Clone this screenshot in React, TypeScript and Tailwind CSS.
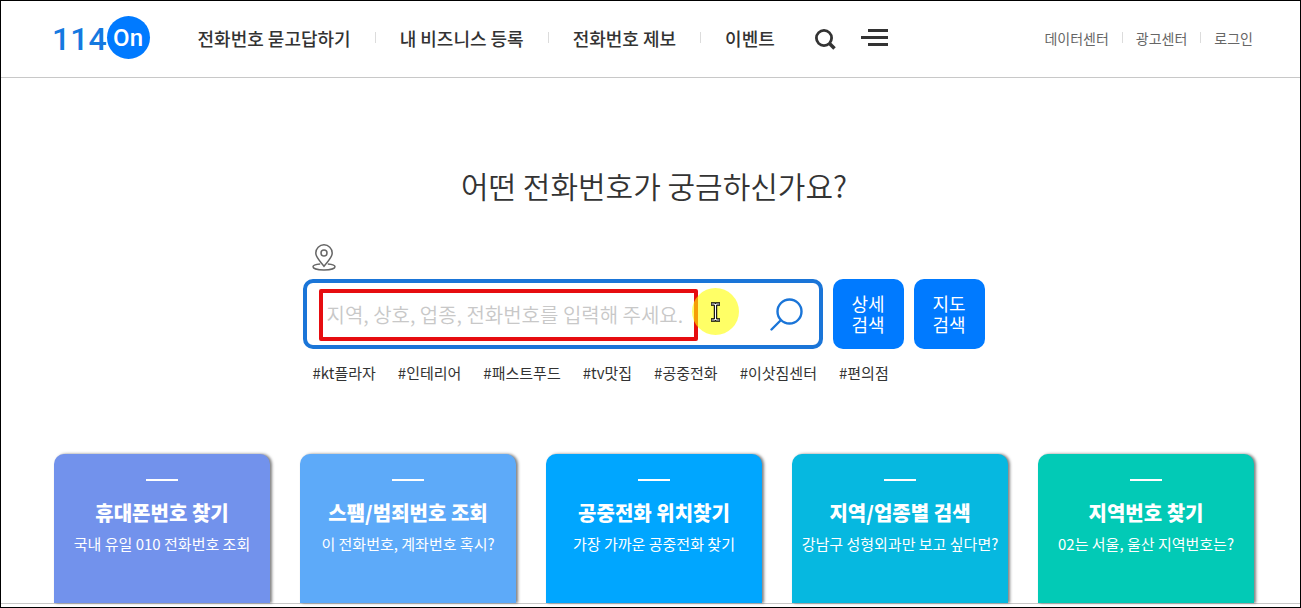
import React from 'react';

interface ServiceCardProps {
  title: string;
  description: string;
  color: string;
}

const mainMenu = ['전화번호 묻고답하기', '내 비즈니스 등록', '전화번호 제보', '이벤트'];

const utilMenu = ['데이터센터', '광고센터', '로그인'];

const tags = ['kt플라자', '인테리어', '패스트푸드', 'tv맛집', '공중전화', '이삿짐센터', '편의점'];

const services: ServiceCardProps[] = [
  { title: '휴대폰번호 찾기', description: '국내 유일 010 전화번호 조회', color: 'bg-[#7292ec]' },
  { title: '스팸/범죄번호 조회', description: '이 전화번호, 계좌번호 혹시?', color: 'bg-[#5daaf9]' },
  { title: '공중전화 위치찾기', description: '가장 가까운 공중전화 찾기', color: 'bg-[#00a6ff]' },
  { title: '지역/업종별 검색', description: '강남구 성형외과만 보고 싶다면?', color: 'bg-[#06b8e0]' },
  { title: '지역번호 찾기', description: '02는 서울, 울산 지역번호는?', color: 'bg-[#02cab6]' },
];

const Logo: React.FC = () => (
  <a href="#" className="flex items-center font-['Roboto',sans-serif] leading-none">
    <span className="pt-0.5 text-[32px] leading-8 font-medium text-[#1579e0]">114</span>
    <span className="flex size-[43px] items-center justify-center rounded-full bg-[#007aff] text-2xl leading-6 font-medium text-white">
      On
    </span>
  </a>
);

const Header: React.FC = () => (
  <header className="flex h-[77px] items-center border-b border-[#c8c8c8] pr-[47px] pb-[3px] pl-[51px]">
    <Logo />
    <nav className="ml-[48px] flex items-center">
      {mainMenu.map((item, i) => (
        <React.Fragment key={item}>
          {i > 0 && <span className="mx-6 h-[11px] w-px bg-[#dcdcdc]" />}
          <a href="#" className="text-lg leading-6 font-medium whitespace-nowrap text-[#333]">
            {item}
          </a>
        </React.Fragment>
      ))}
    </nav>
    <button type="button" aria-label="검색" className="ml-10">
      <svg width="21" height="21" viewBox="0 0 21 21" fill="none" stroke="#333" className="mt-1">
        <circle cx="9" cy="9" r="7.6" strokeWidth="2.8" />
        <path d="M14.5 14.5 L19.5 19.5" strokeWidth="3.6" />
      </svg>
    </button>
    <button type="button" aria-label="전체 메뉴" className="ml-[25px]">
      <svg width="27" height="17" viewBox="0 0 27 17" fill="#333">
        <path d="M7 0H27V3H7zM0 7H27V10H0zM7 14H27V17H7z" />
      </svg>
    </button>
    <nav className="ml-auto flex items-center">
      {utilMenu.map((item, i) => (
        <React.Fragment key={item}>
          {i > 0 && <span className="mx-[13px] h-[11px] w-px bg-[#dcdcdc]" />}
          <a href="#" className="text-sm leading-5 whitespace-nowrap text-[#666]">
            {item}
          </a>
        </React.Fragment>
      ))}
    </nav>
  </header>
);

const PinIcon: React.FC = () => (
  <svg width="24" height="27" viewBox="0 0 24 27" fill="none" stroke="#666" strokeWidth="1.5">
    <path d="M12 22.2 C8.5 17.5 3.8 13.6 3.8 9 A8.2 8.2 0 0 1 20.2 9 C20.2 13.6 15.5 17.5 12 22.2 Z" />
    <circle cx="12" cy="9" r="3" />
    <path d="M8.2 19.9 C3.8 20.2 1 21.2 1 22.7 C1 24.6 5.8 25.9 12 25.9 C18.2 25.9 23 24.6 23 22.7 C23 21.2 20.2 20.2 15.8 19.9" />
  </svg>
);

// Highlight frame and mouse pointer drawn over the search field
const FieldMarker: React.FC = () => (
  <div className="pointer-events-none absolute inset-0">
    <div className="absolute top-1.5 left-3 h-[52px] w-[379px] rounded-xs border-4 border-[#e60d10]" />
    <div className="absolute top-[5px] left-[385px] flex size-[47px] items-center justify-center rounded-full bg-[#ffff00]/60">
      <svg width="11" height="20" viewBox="0 0 11 20" fill="none">
        <path d="M1 2H4.5L5.5 3L6.5 2H10M5.5 3V17M1 18H4.5L5.5 17L6.5 18H10" stroke="#000" strokeWidth="3.4" />
        <path d="M1.5 2H4.5L5.5 3L6.5 2H9.5M5.5 3V17M1.5 18H4.5L5.5 17L6.5 18H9.5" stroke="#fff" strokeWidth="1.2" />
      </svg>
    </div>
  </div>
);

const SearchBox: React.FC = () => (
  <form className="flex gap-2.5" onSubmit={(e) => e.preventDefault()}>
    <div className="relative flex h-[70px] w-[520px] items-center rounded-[10px] border-4 border-[#1a75d8] pr-4 pl-5">
      <input
        type="text"
        aria-label="검색어"
        placeholder="지역, 상호, 업종, 전화번호를 입력해 주세요."
        className="min-w-0 flex-1 pt-0.5 text-xl leading-7 font-[350] outline-none placeholder:text-[#c8c8c8]"
      />
      <button type="submit" aria-label="검색">
        <svg width="33" height="33" viewBox="0 0 33 33" fill="none" stroke="#1a75d8" strokeWidth="2.4" strokeLinecap="round">
          <circle cx="19.5" cy="13.5" r="12" />
          <path d="M10.5 22.5 L1.5 31.5" />
        </svg>
      </button>
      <FieldMarker />
    </div>
    {['상세', '지도'].map((kind) => (
      <button
        key={kind}
        type="button"
        className="h-[70px] w-[71px] rounded-[10px] bg-[#007aff] text-lg leading-[21px] text-white"
      >
        {kind}
        <br />
        검색
      </button>
    ))}
  </form>
);

const ServiceCard: React.FC<ServiceCardProps> = ({ title, description, color }) => (
  <a
    href="#"
    className={`flex flex-col items-center rounded-t-[10px] pt-[25px] text-white shadow-[2px_0_3px_rgba(0,0,0,0.5)] ${color}`}
  >
    <span className="h-0.5 w-8 bg-white" />
    <strong className="mt-[18px] text-xl leading-7 font-black whitespace-nowrap">{title}</strong>
    <span className="mt-[7px] text-[15px] leading-5 font-normal whitespace-nowrap">{description}</span>
  </a>
);

export default function App() {
  return (
    <div className="flex min-h-screen flex-col border border-black bg-white pb-[3px] font-['Noto_Sans_CJK_KR',sans-serif] text-[#333]">
      <Header />
      <main className="flex flex-1 flex-col border-b border-[#c8c8c8] pr-[46px] pl-[53px]">
        <h1 className="mt-[84px] text-center text-3xl leading-[46px] font-[350]">어떤 전화번호가 궁금하신가요?</h1>

        <section className="mx-auto mt-9 w-[703px]">
          <div className="mb-2 pl-[9px]">
            <PinIcon />
          </div>
          <SearchBox />
          <ul className="mt-3.5 flex gap-[22px] pl-2.5 text-[15px] leading-5">
            {tags.map((tag) => (
              <li key={tag}>
                <a href="#" className="whitespace-nowrap">#{tag}</a>
              </li>
            ))}
          </ul>
        </section>

        <section className="mt-[71px] grid min-h-[149px] flex-1 grid-cols-5 gap-[30px]">
          {services.map((service) => (
            <ServiceCard key={service.title} {...service} />
          ))}
        </section>
      </main>
    </div>
  );
}
